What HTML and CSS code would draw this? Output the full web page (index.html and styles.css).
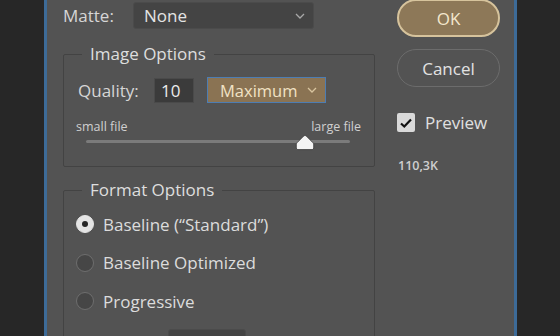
FILE: index.html
```html
<!DOCTYPE html>
<html lang="en">
<head>
    <meta charset="UTF-8">
    <title>JPEG Options</title>
    <link rel="stylesheet" href="styles.css">
</head>
<body>
    <div class="screen">
        <div class="dialog">
            <div class="main">
                <div class="matte-row">
                    <label class="label matte-label">Matte:</label>
                    <div class="select matte-select">
                        <span>None</span>
                        <svg class="chevron" width="10" height="6" viewBox="0 0 10 6"><path d="M1 1 L5 5 L9 1" fill="none" stroke="#a8a8a8" stroke-width="1.3"/></svg>
                    </div>
                </div>

                <fieldset class="group image-options">
                    <legend>Image Options</legend>
                    <div class="quality-row">
                        <label class="label">Quality:</label>
                        <div class="num-input">10</div>
                        <div class="select quality-select">
                            <span>Maximum</span>
                            <svg class="chevron" width="10" height="6" viewBox="0 0 10 6"><path d="M1 1 L5 5 L9 1" fill="none" stroke="#d8c49e" stroke-width="1.3"/></svg>
                        </div>
                    </div>
                    <div class="slider">
                        <div class="slider-labels">
                            <span>small file</span>
                            <span>large file</span>
                        </div>
                        <div class="track">
                            <svg class="thumb" style="left: 83%;" width="20" height="17" viewBox="0 0 20 17"><path d="M10 1.5 Q10.9 1.5 11.7 2.4 L17.8 8.6 Q18.7 9.5 18.7 10.8 L18.7 14 Q18.7 15.6 17.1 15.6 L2.9 15.6 Q1.3 15.6 1.3 14 L1.3 10.8 Q1.3 9.5 2.2 8.6 L8.3 2.4 Q9.1 1.5 10 1.5 Z" fill="#f4f4f4" stroke="#3a3a3a" stroke-width="0.8"/></svg>
                        </div>
                    </div>
                </fieldset>

                <fieldset class="group format-options">
                    <legend>Format Options</legend>
                    <div class="radio-list">
                        <div class="radio-row">
                            <span class="radio checked"></span>
                            <span class="radio-label">Baseline (“Standard”)</span>
                        </div>
                        <div class="radio-row">
                            <span class="radio"></span>
                            <span class="radio-label">Baseline Optimized</span>
                        </div>
                        <div class="radio-row">
                            <span class="radio"></span>
                            <span class="radio-label">Progressive</span>
                        </div>
                    </div>
                    <div class="scans-row">
                        <label class="label scans-label">Scans:</label>
                        <div class="select scans-select"><span>3</span></div>
                    </div>
                </fieldset>
            </div>

            <div class="side">
                <button class="btn btn-ok">OK</button>
                <button class="btn btn-cancel">Cancel</button>
                <div class="preview-row">
                    <span class="checkbox">
                        <svg width="14" height="12" viewBox="0 0 14 12"><path d="M2 6.5 L5.3 9.5 L12 2.5" fill="none" stroke="#111" stroke-width="2.2"/></svg>
                    </span>
                    <span class="preview-label">Preview</span>
                </div>
                <div class="file-size">110,3K</div>
            </div>
        </div>
    </div>
</body>
</html>
```

FILE: styles.css
```css
body {
    margin: 0;
    background-color: #282828;
    font-family: "Open Sans", "Noto Sans", sans-serif;
    color: #d8d8d8;
}
.screen {
    display: flex;
    height: 336px;
    overflow: hidden;
    padding-left: 44px;
    background-color: #272727;
}
.dialog {
    display: flex;
    width: 467px;
    background-color: #535353;
    border-left: 3px solid #3d6b98;
    border-right: 3px solid #3d6b98;
}
.main {
    width: 312px;
    padding: 2px 0 0 16px;
}
.label {
    font-size: 17px;
    color: #d6d6d6;
}
.matte-row {
    display: flex;
    align-items: center;
}
.matte-label {
    width: 70px;
}
.select {
    display: flex;
    align-items: center;
    justify-content: space-between;
    box-sizing: border-box;
    height: 27px;
    padding: 0 8px 0 10px;
    border: 1px solid #4b4b4b;
    border-radius: 3px;
    background-color: #444444;
    font-size: 17px;
    color: #e4e4e4;
}
.matte-select {
    width: 181px;
}
.group {
    margin: 15px 0 0;
    padding: 13px 14px 0;
    border: 1px solid #434343;
    border-radius: 2px;
}
.group legend {
    margin-left: 4px;
    padding: 0 8px;
    font-size: 17px;
    line-height: 20px;
    color: #dedede;
}
.quality-row {
    display: flex;
    align-items: center;
    height: 26px;
}
.quality-row .label {
    width: 76px;
}
.num-input {
    box-sizing: border-box;
    width: 40px;
    height: 25px;
    padding-left: 6px;
    border: 1px solid #4a4a4a;
    background-color: #3b3b3b;
    font-size: 17px;
    line-height: 23px;
    color: #ececec;
}
.quality-select {
    width: 119px;
    height: 26px;
    margin-left: 13px;
    padding-left: 12px;
    border: 1px solid #4d7db3;
    border-radius: 0;
    background-color: #8a7353;
    font-size: 16.5px;
    color: #f1e2c4;
}
.slider {
    padding: 16px 0 23px 0;
    margin-left: -2px;
    margin-right: -1px;
}
.slider-labels {
    display: flex;
    justify-content: space-between;
    font-size: 12.5px;
    line-height: 16px;
    color: #d0d0d0;
}
.track {
    position: relative;
    height: 3px;
    margin: 5px 11px 0 10px;
    border-radius: 2px;
    background-color: #7b7b7b;
}
.thumb {
    position: absolute;
    top: -6px;
    margin-left: -10px;
}
.format-options {
    margin-top: 13px;
    padding-top: 12px;
}
.radio-list {
    display: flex;
    flex-direction: column;
    gap: 14.5px;
}
.radio-row {
    display: flex;
    align-items: center;
    height: 24px;
}
.radio {
    box-sizing: border-box;
    width: 18px;
    height: 18px;
    margin: 0 9px 0 -2px;
    border: 1.5px solid #6e6e6e;
    border-radius: 50%;
    background-color: #464646;
}
.radio.checked {
    display: flex;
    align-items: center;
    justify-content: center;
    border-color: #e4e4e4;
    background-color: #e4e4e4;
}
.radio.checked::after {
    content: "";
    width: 6px;
    height: 6px;
    border-radius: 50%;
    background-color: #262626;
}
.radio-label {
    font-size: 17px;
    color: #dcdcdc;
}
.scans-row {
    display: flex;
    align-items: center;
    margin-top: 16px;
    padding-left: 18px;
}
.scans-label {
    width: 72px;
}
.scans-select {
    width: 78px;
}
.side {
    display: flex;
    flex-direction: column;
    width: 103px;
    margin: -1px 0 0 22px;
}
.btn {
    box-sizing: border-box;
    height: 38px;
    border-radius: 19px;
    font-family: "Open Sans", "Noto Sans", sans-serif;
    font-size: 17px;
    cursor: pointer;
}
.btn-ok {
    border: 2px solid #d6c39c;
    background-color: #8d7858;
    color: #f3e7cd;
}
.btn-cancel {
    margin-top: 12px;
    border: 1.5px solid #6c6c6c;
    background-color: transparent;
    color: #e2e2e2;
}
.preview-row {
    display: flex;
    align-items: center;
    margin-top: 24px;
}
.checkbox {
    display: flex;
    align-items: center;
    justify-content: center;
    width: 18px;
    height: 19px;
    border-radius: 2px;
    background-color: #d9d9d9;
}
.preview-label {
    margin-left: 10px;
    font-size: 17px;
    color: #e0e0e0;
}
.file-size {
    margin-top: 23px;
    margin-left: 1px;
    font-size: 12.5px;
    font-weight: 600;
    color: #cfcfcf;
}
```
